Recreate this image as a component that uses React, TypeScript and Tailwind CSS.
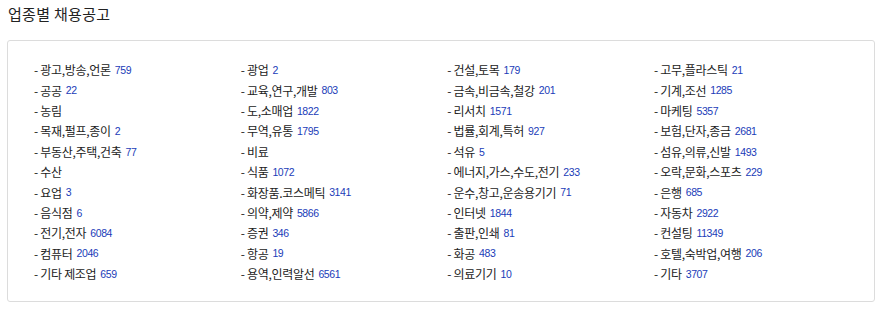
import React from "react";

const cols: [string, string][][] = [
  [
    ["광고,방송,언론", "759"],
    ["공공", "22"],
    ["농림", ""],
    ["목재,펄프,종이", "2"],
    ["부동산,주택,건축", "77"],
    ["수산", ""],
    ["요업", "3"],
    ["음식점", "6"],
    ["전기,전자", "6084"],
    ["컴퓨터", "2046"],
    ["기타 제조업", "659"],
  ],
  [
    ["광업", "2"],
    ["교육,연구,개발", "803"],
    ["도,소매업", "1822"],
    ["무역,유통", "1795"],
    ["비료", ""],
    ["식품", "1072"],
    ["화장품.코스메틱", "3141"],
    ["의약,제약", "5866"],
    ["증권", "346"],
    ["항공", "19"],
    ["용역,인력알선", "6561"],
  ],
  [
    ["건설,토목", "179"],
    ["금속,비금속,철강", "201"],
    ["리서치", "1571"],
    ["법률,회계,특허", "927"],
    ["석유", "5"],
    ["에너지,가스,수도,전기", "233"],
    ["운수,창고,운송용기기", "71"],
    ["인터넷", "1844"],
    ["출판,인쇄", "81"],
    ["화공", "483"],
    ["의료기기", "10"],
  ],
  [
    ["고무,플라스틱", "21"],
    ["기계,조선", "1285"],
    ["마케팅", "5357"],
    ["보험,단자,종금", "2681"],
    ["섬유,의류,신발", "1493"],
    ["오락,문화,스포츠", "229"],
    ["은행", "685"],
    ["자동차", "2922"],
    ["컨설팅", "11349"],
    ["호텔,숙박업,여행", "206"],
    ["기타", "3707"],
  ],
];

export default function App() {
  return (
    <div
      className="w-[875px] h-[309px] bg-white overflow-hidden text-[#222]"
      style={{ fontFamily: '"Noto Sans CJK KR", "Noto Sans", sans-serif' }}
    >
      <h2 className="pl-[8px] pt-[3px] h-[40px] text-[15px] leading-[22px] tracking-[0.3px] text-[#222] font-normal">
        업종별 채용공고
      </h2>
      <div className="ml-[7px] w-[868px] h-[262px] border border-[#dcdcdc] rounded-[3px] pl-[26px] pt-[19px]">
        <div className="grid grid-cols-[repeat(4,206.67px)]">
          {cols.map((col, ci) => (
            <ul key={ci} className="flex flex-col">
              {col.map(([name, num], i) => (
                <li key={i} className="h-[20.4px] flex items-center text-[12px] leading-none whitespace-nowrap tracking-[-0.3px]">
                  <span>- {name}</span>
                  {num && (
                    <span
                      className="ml-[4px] text-[10.5px] text-[#1a3cb8] tracking-[-0.4px]"
                      style={{ fontFamily: '"Liberation Sans", Arial, sans-serif' }}
                    >
                      {num}
                    </span>
                  )}
                </li>
              ))}
            </ul>
          ))}
        </div>
      </div>
    </div>
  );
}
